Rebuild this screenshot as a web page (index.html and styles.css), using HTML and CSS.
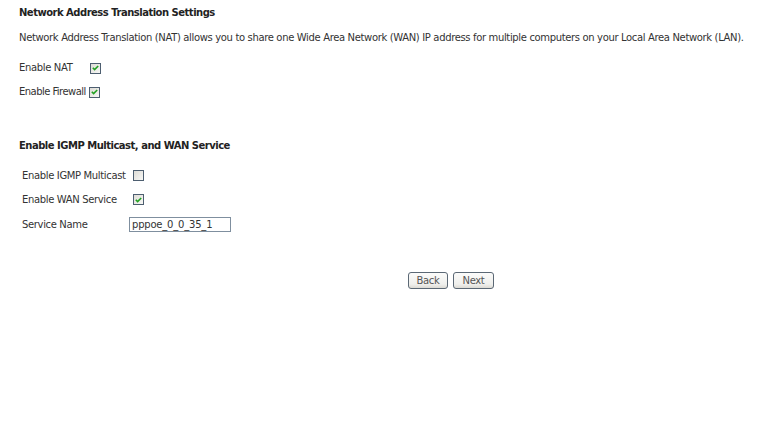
FILE: index.html
```html
<!DOCTYPE html>
<html>
<head>
<meta charset="utf-8">
<link rel="stylesheet" href="styles.css">
</head>
<body>
<div class="page">
  <div class="title">Network Address Translation Settings</div>
  <div class="desc">Network Address Translation (NAT) allows you to share one Wide Area Network (WAN) IP address for multiple computers on your Local Area Network (LAN).</div>
  <div class="row nat"><span class="lbl">Enable NAT</span><span class="cb on"><svg width="7" height="6" viewBox="0 0 7 6"><path d="M0.8 2.8 L2.6 4.6 L6.2 1" fill="none" stroke="#21a121" stroke-width="1.6"/></svg></span></div>
  <div class="row fw"><span class="lbl">Enable Firewall</span><span class="cb on"><svg width="7" height="6" viewBox="0 0 7 6"><path d="M0.8 2.8 L2.6 4.6 L6.2 1" fill="none" stroke="#21a121" stroke-width="1.6"/></svg></span></div>

  <div class="title sec2">Enable IGMP Multicast, and WAN Service</div>
  <div class="tbl">
    <div class="trow"><span class="tlbl">Enable IGMP Multicast</span><span class="cb"></span></div>
    <div class="trow"><span class="tlbl">Enable WAN Service</span><span class="cb on"><svg width="7" height="6" viewBox="0 0 7 6"><path d="M0.8 2.8 L2.6 4.6 L6.2 1" fill="none" stroke="#21a121" stroke-width="1.6"/></svg></span></div>
    <div class="trow"><span class="tlbl">Service Name</span><span class="inp">pppoe_0_0_35_1</span></div>
  </div>
  <div class="btns"><span class="btn back">Back</span><span class="btn next">Next</span></div>
</div>
</body>
</html>
```
FILE: styles.css
```css
html, body { margin: 0; padding: 0; background: #fff; }
body { font-family: "DejaVu Sans", Verdana, sans-serif; font-size: 10px; color: #333; letter-spacing: -0.35px; }
.page { padding: 5px 0 0 19px; width: 780px; box-sizing: border-box; }
.title { font-weight: bold; font-size: 10px; color: #222; height: 16px; line-height: 16px; letter-spacing: -0.5px; white-space: nowrap; }
.desc { margin-top: 9px; height: 16px; line-height: 16px; white-space: nowrap; }
.row { display: flex; align-items: center; height: 16px; line-height: 16px; white-space: nowrap; }
.lbl, .tlbl { flex-shrink: 0; white-space: nowrap; }
.nat { margin-top: 14px; }
.fw { margin-top: 8px; }
.nat .lbl { width: 71px; }
.fw .lbl { width: 70px; letter-spacing: -0.55px; }
.cb { flex-shrink: 0; display: inline-flex; align-items: center; justify-content: center; width: 9px; height: 9px; border: 1px solid #4d5e70; background: linear-gradient(135deg, #dedcd6, #f7f7f5); }
.sec2 { margin-top: 38px; }
.tbl { padding-left: 3px; margin-top: 13px; }
.trow { display: flex; align-items: center; height: 16px; margin-bottom: 8.5px; }
.trow:last-child { margin-bottom: 0; }
.tlbl { width: 111px; }
.inp { margin-left: -4px; width: 98px; height: 13px; line-height: 13px; border: 1px solid #7f8f9f; padding-left: 2px; font-size: 10px; color: #333; letter-spacing: -0.2px; }
.btns { display: flex; gap: 5px; padding-left: 389px; margin-top: 40px; }
.btn { display: inline-flex; align-items: center; justify-content: center; height: 15px; border: 1px solid #5b6875; border-radius: 3px; background: linear-gradient(#fbfbfa, #efefec 75%, #dcdad4); color: #555; font-size: 10px; }
.back { width: 38px; }
.next { width: 39px; }
```
